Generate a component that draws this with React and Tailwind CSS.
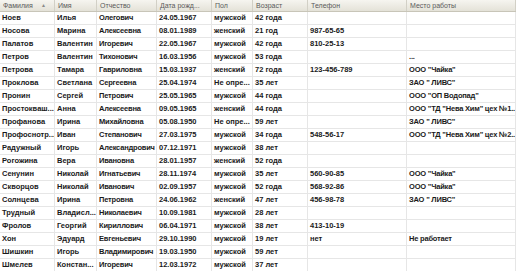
const columns = [
  "Фамилия",
  "Имя",
  "Отчество",
  "Дата рожд...",
  "Пол",
  "Возраст",
  "Телефон",
  "Место работы",
];

const rows = [
  ["Ноев", "Илья", "Олегович", "24.05.1967", "мужской", "42 года", "", ""],
  ["Носова", "Марина", "Алексеевна", "08.01.1989", "женский", "21 год", "987-65-65", ""],
  ["Палатов", "Валентин", "Игоревич", "22.05.1967", "мужской", "42 года", "810-25-13", ""],
  ["Петров", "Валентин", "Тихонович", "16.03.1956", "мужской", "53 года", "", "..."],
  ["Петрова", "Тамара", "Гавриловна", "15.03.1937", "женский", "72 года", "123-456-789", "ООО \"Чайка\""],
  ["Проклова", "Светлана", "Сергеевна", "25.04.1974", "Не опре...", "35 лет", "", "ЗАО \" ЛИВС\""],
  ["Пронин", "Сергей", "Петрович", "25.05.1965", "мужской", "44 года", "", "ООО \"ОП Водопад\""],
  ["Простоквaш...", "Анна", "Алексеевна", "09.05.1965", "женский", "44 года", "", "ООО \"ТД \"Нева Хим\" цех №1..."],
  ["Профанова", "Ирина", "Михайловна", "05.08.1950", "Не опре...", "59 лет", "", "ЗАО \" ЛИВС\""],
  ["Профоснотр...", "Иван", "Степанович", "27.03.1975", "мужской", "34 года", "548-56-17", "ООО \"ТД \"Нева Хим\" цех №2..."],
  ["Радужный", "Игорь", "Александрович", "07.12.1971", "мужской", "38 лет", "", ""],
  ["Рогожина", "Вера", "Ивановна", "28.01.1957", "женский", "52 года", "", ""],
  ["Сенунин", "Николай", "Игнатьевич", "28.11.1974", "мужской", "35 лет", "560-90-85", "ООО \"Чайка\""],
  ["Скворцов", "Николай", "Иванович", "02.09.1957", "мужской", "52 года", "568-92-86", "ООО \"Чайка\""],
  ["Солнцева", "Ирина", "Петровна", "24.06.1962", "женский", "47 лет", "456-98-78", "ЗАО \" ЛИВС\""],
  ["Трудный", "Владисл...", "Николаевич", "10.09.1981", "мужской", "28 лет", "", ""],
  ["Фролов", "Георгий", "Кириллович", "06.04.1971", "мужской", "38 лет", "413-10-19", ""],
  ["Хон", "Эдуард", "Евгеньевич", "29.10.1990", "мужской", "19 лет", "нет", "Не работает"],
  ["Шишкин", "Игорь", "Владимирович", "19.03.1950", "мужской", "59 лет", "", ""],
  ["Шмелев", "Констан...", "Игоревич", "12.03.1972", "мужской", "37 лет", "", ""],
];

const grid = "grid grid-cols-[55px_42px_60px_55px_41px_55px_99px_109px]";

export default function App() {
  return (
    <div
      className="w-[516px] h-[271px] overflow-hidden bg-white"
      style={{ fontFamily: '"Liberation Sans", Arial, sans-serif' }}
    >
      {/* header */}
      <div className={`${grid} h-[12px] bg-gradient-to-b from-[#f6f5f0] to-[#e4e2d8] border-b border-[#c8c5b8]`}>
        {columns.map((c, i) => (
          <div
            key={c}
            className="relative flex items-center px-[3px] text-[7px] leading-none text-[#5a5a5a] whitespace-nowrap overflow-hidden border-r border-[#d2d0c6]"
          >
            {c}
            {i === 0 && (
              <span className="absolute left-[41px] top-[3px] text-[5px] text-[#8a8a8a]">▲</span>
            )}
          </div>
        ))}
      </div>

      {/* rows */}
      {rows.map((r, ri) => (
        <div key={ri} className={`${grid} h-[13px] border-b border-[#e6e6e6]`}>
          {r.map((v, ci) => (
            <div
              key={ci}
              className={`flex items-center px-[2px] text-[7.5px] font-bold leading-none text-[#1a1a1a] whitespace-nowrap overflow-hidden border-r border-[#e6e6e6] ${
                ci === 7 || ci === 2 ? "tracking-[-0.2px]" : ""
              }`}
            >
              {v}
            </div>
          ))}
        </div>
      ))}
    </div>
  );
}
